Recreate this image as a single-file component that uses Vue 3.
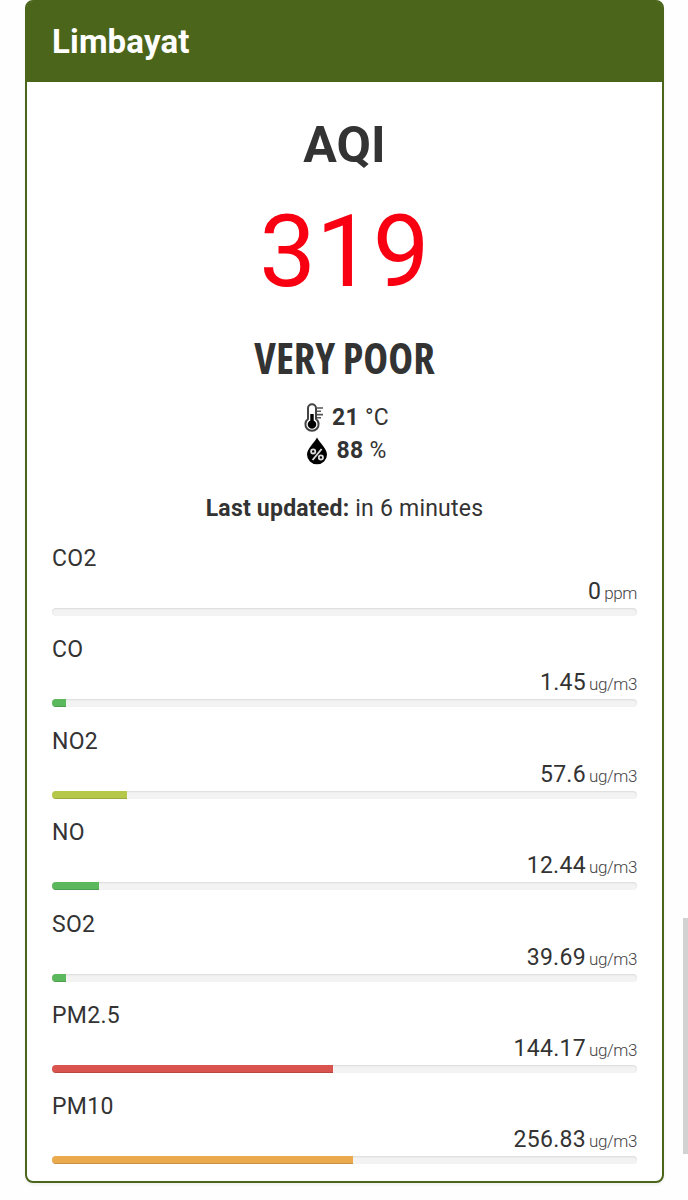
<template>
  <div class="page">
    <div class="panel">
      <div class="panel-heading">{{ station.name }}</div>
      <div class="panel-body">
        <h1>AQI</h1>
        <div class="aqi">{{ station.aqi }}</div>
        <h2>{{ station.status }}</h2>
        <div class="weather">
          <svg class="icon-temp" width="20" height="29" viewBox="0 0 20 29">
            <path d="M4 16V5.2a4 4 0 0 1 8 0V16a6.6 6.6 0 1 1-8 0z" fill="#fff" stroke="#444" stroke-width="2" />
            <path d="M6.3 11h3.4v6.4a4.3 4.3 0 1 1-3.4 0z" fill="#000" />
            <path d="M13 5h6M13 8.3h4M13 11.6h6M13 14.8h4" stroke="#555" stroke-width="1.6" />
          </svg>
          <span><b>{{ station.temperature }}</b> °C</span>
        </div>
        <div class="weather">
          <svg class="icon-hum" width="22" height="28" viewBox="0 0 22 28">
            <path d="M11 .5C9 5 1 11.5 1 17.5a10 9.8 0 0 0 20 0C21 11.5 13 5 11 .5z" fill="#000" />
            <path d="M6.6 23l9-11" stroke="#ddd" stroke-width="1.9" />
            <circle cx="7.2" cy="14.4" r="2.1" fill="none" stroke="#ddd" stroke-width="1.8" />
            <circle cx="14.9" cy="20.4" r="2.1" fill="none" stroke="#ddd" stroke-width="1.8" />
          </svg>
          <span><b>{{ station.humidity }}</b> %</span>
        </div>
        <p class="updated"><b>Last updated:</b> in 6 minutes</p>
        <div v-for="gas in gases" :key="gas.name" class="gas">
          <div class="gas-name">{{ gas.name }}</div>
          <div class="gas-value">
            <span>{{ gas.value }}</span>
            <small>{{ gas.unit }}</small>
          </div>
          <div class="progress">
            <div class="bar" :class="gas.level" :style="{ width: gas.percent + '%' }"></div>
          </div>
        </div>
      </div>
    </div>
    <div class="scroll-thumb"></div>
  </div>
</template>

<script setup>
const station = {
  name: 'Limbayat',
  aqi: 319,
  status: 'VERY POOR',
  temperature: 21,
  humidity: 88
}

const gases = [
  { name: 'CO2', value: '0', unit: 'ppm', percent: 0, level: 'good' },
  { name: 'CO', value: '1.45', unit: 'ug/m3', percent: 2.4, level: 'good' },
  { name: 'NO2', value: '57.6', unit: 'ug/m3', percent: 12.8, level: 'fair' },
  { name: 'NO', value: '12.44', unit: 'ug/m3', percent: 8, level: 'good' },
  { name: 'SO2', value: '39.69', unit: 'ug/m3', percent: 2.4, level: 'good' },
  { name: 'PM2.5', value: '144.17', unit: 'ug/m3', percent: 48, level: 'bad' },
  { name: 'PM10', value: '256.83', unit: 'ug/m3', percent: 51.4, level: 'moderate' }
]
</script>

<style>
body {
  margin: 0;
  background: #fefefe;
}
</style>

<style scoped>
.page {
  position: relative;
  height: 1200px;
  padding: 0 24px 0 25px;
  box-sizing: border-box;
  overflow: hidden;
  font-family: Roboto, "Liberation Sans", sans-serif;
  font-size: 23px;
  letter-spacing: 0.3px;
  color: #333;
}

.panel {
  height: 1183px;
  box-sizing: border-box;
  border: 2px solid #4b651b;
  border-radius: 8px;
  background: #fff;
  box-shadow: 0 2px 3px rgba(0, 0, 0, 0.06);
}

.panel-heading {
  height: 80px;
  padding-left: 25px;
  box-sizing: border-box;
  background: #4b651b;
  border-radius: 5px 5px 0 0;
  color: #fff;
  font-size: 33px;
  font-weight: 700;
  line-height: 80px;
  letter-spacing: 0.15px;
}

.panel-body {
  padding: 0 25px;
  text-align: center;
}

h1 {
  margin: 33px 0 0;
  font-size: 50px;
  line-height: 60px;
  letter-spacing: 0;
}

.aqi {
  margin-top: 17px;
  color: #f80012;
  font-size: 101px;
  line-height: 120px;
  letter-spacing: 0;
}

h2 {
  margin: 18px 0 0;
  font-family: "Open Sans", "Noto Sans", sans-serif;
  font-size: 42px;
  font-stretch: 75%;
  line-height: 56px;
  letter-spacing: 0;
}

.weather {
  display: flex;
  justify-content: center;
  align-items: center;
  height: 33px;
  padding-left: 4px;
}

h2 + .weather {
  margin-top: 15px;
}

.icon-temp,
.icon-hum {
  margin-right: 8px;
}

.updated {
  margin: 25px 0 17px;
  line-height: 33px;
  letter-spacing: 0.22px;
}

.gas {
  height: 91.4px;
}

.gas-name {
  line-height: 33px;
  text-align: left;
}

.gas-value {
  display: flex;
  justify-content: flex-end;
  align-items: baseline;
  gap: 3px;
  height: 33px;
  line-height: 33px;
}

.gas-value small {
  font-size: 17px;
  font-weight: 300;
  letter-spacing: -0.4px;
  color: #444;
}

.progress {
  height: 8px;
  border-radius: 4px;
  background: #f3f3f3;
  box-shadow: inset 0 1px 2px rgba(0, 0, 0, 0.1);
  overflow: hidden;
}

.bar {
  height: 100%;
  box-shadow: inset 0 -1px 0 rgba(0, 0, 0, 0.15);
}

.good {
  background: #5cb85c;
}

.fair {
  background: #b5c84a;
}

.moderate {
  background: #ebaa4e;
}

.bad {
  background: #d9534f;
}

.scroll-thumb {
  position: absolute;
  top: 918px;
  right: 0;
  width: 5px;
  height: 236px;
  background: #d2d2d2;
}
</style>
